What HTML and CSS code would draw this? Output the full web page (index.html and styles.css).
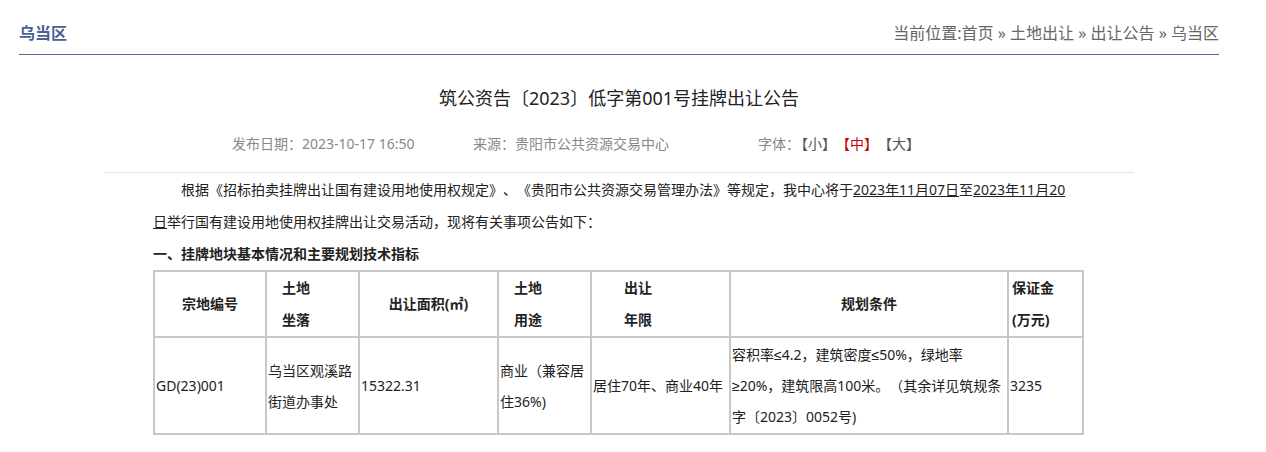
FILE: index.html
```html
<!DOCTYPE html>
<html lang="zh-CN">
<head>
<meta charset="utf-8">
<title>筑公资告〔2023〕低字第001号挂牌出让公告</title>
<link rel="stylesheet" href="styles.css">
</head>
<body>
<div class="page">
  <div class="topbar">
    <div class="area">乌当区</div>
    <div class="crumb">当前位置:<a href="#">首页</a> » <a href="#">土地出让</a> » <a href="#">出让公告</a> » <a href="#">乌当区</a></div>
  </div>
  <div class="article">
    <h1 class="title">筑公资告〔2023〕低字第001号挂牌出让公告</h1>
    <div class="meta">
      <span class="m-date">发布日期：2023-10-17 16:50</span>
      <span class="m-src">来源：贵阳市公共资源交易中心</span>
      <span class="m-font">字体<span class="colon">：</span><a href="#">【小】</a><a href="#" class="on">【中】</a><a href="#">【大】</a></span>
    </div>
    <div class="content">
      <p class="para">根据《招标拍卖挂牌出让国有建设用地使用权规定》、《贵阳市公共资源交易管理办法》等规定，我中心将于<u>2023年11月07日</u>至<u>2023年11月20日</u>举行国有建设用地使用权挂牌出让交易活动，现将有关事项公告如下：</p>
      <p class="sec">一、挂牌地块基本情况和主要规划技术指标</p>
      <table class="grid">
        <colgroup>
          <col class="w1"><col class="w2"><col class="w3"><col class="w4"><col class="w5"><col class="w6"><col class="w7">
        </colgroup>
        <thead>
          <tr>
            <td class="ctr">宗地编号</td>
            <td class="ind1">土地<br>坐落</td>
            <td class="ctr">出让面积(㎡)</td>
            <td class="ind1">土地<br>用途</td>
            <td class="ind2">出让<br>年限</td>
            <td class="ctr">规划条件</td>
            <td class="ind0">保证金<br>(万元)</td>
          </tr>
        </thead>
        <tbody>
          <tr>
            <td>GD(23)001</td>
            <td>乌当区观溪路街道办事处</td>
            <td>15322.31</td>
            <td>商业（兼容居住36%)</td>
            <td>居住70年、商业40年</td>
            <td>容积率≤4.2，建筑密度≤50%，绿地率<br>≥20%，建筑限高100米。（其余详见筑规条<br>字〔2023〕0052号)</td>
            <td>3235</td>
          </tr>
        </tbody>
      </table>
    </div>
  </div>
</div>
</body>
</html>
```

FILE: styles.css
```css
body {
  margin: 0;
  font-family: "Noto Sans", "Liberation Sans", "Noto Sans CJK SC", sans-serif;
  color: #222;
  background: #fff;
  text-spacing-trim: space-all;
}

a {
  color: inherit;
  text-decoration: none;
}

.page {
  width: 1200px;
  margin-left: 19px;
}

.topbar {
  display: flex;
  justify-content: space-between;
  align-items: center;
  height: 44px;
  padding-top: 10px;
  border-bottom: 1px solid #5c6d95;
}

.area {
  font-size: 16px;
  font-weight: bold;
  color: #4a6096;
}

.crumb {
  font-size: 16px;
  color: #666;
}

.article {
  width: 1030px;
  margin: 0 auto;
}

.title {
  margin: 28px 0 0;
  font-size: 18px;
  font-weight: normal;
  line-height: 30px;
  text-align: center;
  color: #222;
}

.meta {
  display: flex;
  margin-top: 16px;
  padding: 0 0 13px 128px;
  font-size: 14px;
  line-height: 30px;
  color: #888;
  border-bottom: 1px solid #e5e5e5;
}

.m-date {
  width: 241px;
}

.m-src {
  width: 285px;
}

.m-font .colon {
  letter-spacing: -6px;
}

.m-font a {
  color: #555;
}

.m-font a.on {
  color: #cc0000;
}

.content {
  padding: 1px 50px 0 49px;
}

.para {
  margin: 0 8px 0 0;
  font-size: 14px;
  line-height: 32px;
  text-indent: 2em;
  color: #222;
}

.para u {
  text-decoration: underline;
}

.sec {
  margin: 0;
  font-size: 14px;
  font-weight: bold;
  line-height: 32px;
  color: #222;
}

.grid {
  border-collapse: collapse;
  table-layout: fixed;
  width: 929px;
  font-size: 14px;
  color: #222;
}

.w1 { width: 112px; }
.w2 { width: 93px; }
.w3 { width: 139px; }
.w4 { width: 93px; }
.w5 { width: 139px; }
.w6 { width: 278px; }
.w7 { width: 75px; }

.grid td {
  border: 2px solid #c8c8c8;
  padding: 1px 1px;
  line-height: 31px;
  vertical-align: middle;
  text-align: left;
}

.grid thead td {
  padding: 0 1px;
  line-height: 32px;
  font-weight: bold;
}

.grid thead td.ctr {
  text-align: center;
}

.grid thead td.ind1 {
  padding-left: 15px;
}

.grid thead td.ind2 {
  padding-left: 32px;
}

.grid thead td.ind0 {
  padding-left: 3px;
}
```
